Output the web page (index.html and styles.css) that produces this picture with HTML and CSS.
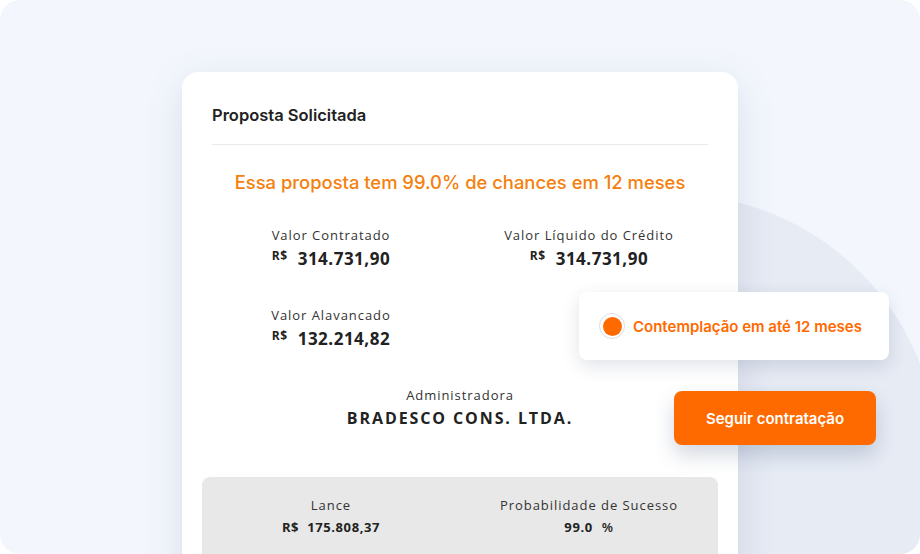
FILE: index.html
```html
<!DOCTYPE html>
<html>

<head>
    <meta name="viewport" content="width=device-width, minimum-scale=1">
    <title>Proposta Solicitada</title>
    <link rel="stylesheet" href="styles.css">
</head>

<body>
    <div class="frame">
        <div class="bg-circle"></div>

        <!-- proposal card -->
        <div class="card">
            <h1 class="card-title">Proposta Solicitada</h1>
            <p class="chance">Essa proposta tem 99.0% de chances em 12 meses</p>

            <div class="stats">
                <div class="stat">
                    <div class="stat-label">Valor Contratado</div>
                    <div class="stat-value"><span class="cur">R$</span>314.731,90</div>
                </div>
                <div class="stat">
                    <div class="stat-label">Valor Líquido do Crédito</div>
                    <div class="stat-value"><span class="cur">R$</span>314.731,90</div>
                </div>
                <div class="stat">
                    <div class="stat-label">Valor Alavancado</div>
                    <div class="stat-value"><span class="cur">R$</span>132.214,82</div>
                </div>
            </div>

            <div class="admin">
                <div class="stat-label">Administradora</div>
                <div class="admin-name">BRADESCO CONS. LTDA.</div>
            </div>

            <div class="bid">
                <div class="stat">
                    <div class="stat-label">Lance</div>
                    <div class="bid-value"><span class="bid-cur">R$</span>175.808,37</div>
                </div>
                <div class="stat">
                    <div class="stat-label">Probabilidade de Sucesso</div>
                    <div class="bid-value">99.0<span class="pct">%</span></div>
                </div>
            </div>
        </div>

        <!-- floating bits over the card -->
        <div class="option">
            <span class="radio"><span class="radio-dot"></span></span>
            Contemplação em até 12 meses
        </div>
        <button class="cta">Seguir contratação</button>
    </div>
</body>

</html>
```

FILE: styles.css
```css
:root {
    --frame: #f3f7fd;
    --circle: #e6ebf4;
    --text: #222;
    --muted: #333;
    --orange: #f5800d;
    --primary: #ff6a00;
    --line: #e9e9e9;
    --gray-box: #e8e8e8;
}

* {
    box-sizing: border-box;
    padding: 0;
    margin: 0;
}

body {
    background: #fff;
    font-family: Inter, "Noto Sans", sans-serif;
    color: var(--text);
}

.frame {
    position: relative;
    width: 920px;
    height: 554px;
    background: var(--frame);
    border-radius: 20px;
    overflow: hidden;
    padding: 72px 0 0 182px;
}

.bg-circle {
    position: absolute;
    left: 406px;
    top: 194px;
    width: 532px;
    height: 532px;
    border-radius: 50%;
    background: var(--circle);
}

.card {
    position: relative;
    width: 556px;
    min-height: 520px;
    background: #fff;
    border-radius: 16px;
    padding: 33px 30px 30px;
    box-shadow: 0 10px 40px rgba(40, 60, 100, 0.12);
}

.card-title {
    font-size: 16.5px;
    font-weight: 600;
    line-height: 20px;
    color: var(--text);
    padding-bottom: 19px;
    border-bottom: 1px solid var(--line);
}

.chance {
    margin-top: 25px;
    text-align: center;
    font-size: 18.4px;
    font-weight: 500;
    line-height: 24px;
    color: var(--orange);
}

.stats {
    display: grid;
    grid-template-columns: 1fr 1fr;
    column-gap: 20px;
    row-gap: 36px;
    margin-top: 32px;
}

.stat {
    text-align: center;
}

.stat-label {
    font-family: "Open Sans", sans-serif;
    font-size: 13px;
    line-height: 18px;
    letter-spacing: 0.95px;
    color: var(--muted);
}

.stat-value {
    display: flex;
    justify-content: center;
    align-items: flex-start;
    margin-top: 4px;
    font-family: "Open Sans", sans-serif;
    font-size: 17px;
    font-weight: 700;
    line-height: 22px;
    letter-spacing: 0.5px;
    color: var(--text);
}

.cur {
    font-size: 12px;
    line-height: 16px;
    margin-right: 10px;
}

.admin {
    margin-top: 36px;
    text-align: center;
}

.admin-name {
    margin-top: 3px;
    font-family: "Open Sans", sans-serif;
    font-size: 16px;
    font-weight: 700;
    line-height: 22px;
    letter-spacing: 1.9px;
    color: var(--text);
}

.bid {
    display: grid;
    grid-template-columns: 1fr 1fr;
    column-gap: 20px;
    margin: 48px -10px 0;
    padding: 19px 10px 30px;
    background: var(--gray-box);
    border-radius: 8px;
}

.bid-value {
    margin-top: 4px;
    font-family: "Open Sans", sans-serif;
    font-size: 13px;
    font-weight: 700;
    line-height: 18px;
    letter-spacing: 0.6px;
    color: var(--text);
}

.bid-cur {
    margin-right: 8px;
}

.pct {
    font-weight: 600;
    margin-left: 9px;
}

.option {
    position: absolute;
    left: 579px;
    top: 292px;
    width: 310px;
    height: 68px;
    display: flex;
    align-items: center;
    gap: 8px;
    padding-left: 20px;
    background: #fff;
    border-radius: 8px;
    box-shadow: 0 6px 18px rgba(40, 60, 100, 0.14);
    font-size: 15px;
    font-weight: 600;
    color: var(--primary);
}

.radio {
    width: 26px;
    height: 26px;
    border-radius: 50%;
    border: 1.5px solid #ddd;
    display: flex;
    align-items: center;
    justify-content: center;
}

.radio-dot {
    width: 19px;
    height: 19px;
    border-radius: 50%;
    background: var(--primary);
}

.cta {
    position: absolute;
    left: 674px;
    top: 391px;
    width: 202px;
    height: 54px;
    border: none;
    border-radius: 8px;
    background: var(--primary);
    color: #fff;
    font-family: Inter, "Noto Sans", sans-serif;
    font-size: 15px;
    font-weight: 600;
    box-shadow: 0 10px 20px rgba(40, 60, 100, 0.2);
    cursor: pointer;
}
```
